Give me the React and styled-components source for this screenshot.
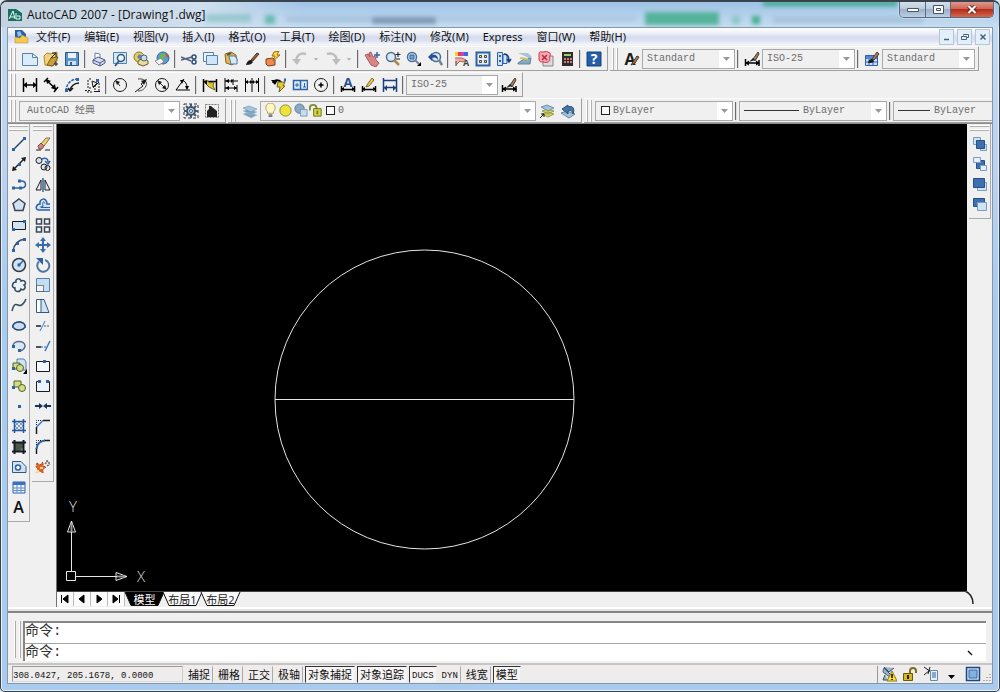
import { useState } from "react";
import styled, { createGlobalStyle } from 'styled-components'

const GlobalStyle = createGlobalStyle`
  * { box-sizing: border-box; }
  body {
    margin: 0;
    background: #dfe6ee;
    font-family: "Noto Sans", "Noto Sans CJK SC", sans-serif;
    font-size: 11px;
    color: #111;
  }
  button, select, input { font: inherit; color: inherit; }
`

const MONO = '"Liberation Mono", "Noto Sans CJK SC", monospace';

/* ---------- window ---------- */

const Window = styled.div`
  display: flex;
  flex-direction: column;
  min-height: 100vh;
  padding: 0 6px 7px;
  border: 1px solid #39424d;
  border-top-width: 2px;
  border-radius: 7px 7px 5px 5px;
  background: linear-gradient(#b5d1ec, #c3daf0 26px, #bdd3ee 160px, #a9cbee 300px, #a9cbee);
  box-shadow: inset 0 0 0 1px #e4f1fc;
`

const TitleBar = styled.header`
  position: relative;
  display: flex;
  align-items: center;
  height: 25px;
  margin: 0 -6px;
  padding-left: 7px;
  gap: 5px;
  border-radius: 6px 6px 0 0;
  background: linear-gradient(90deg, #c5d3e0, #cfdfee 200px, transparent 300px), linear-gradient(#9fc3e6, #c6ddf1);
  overflow: hidden;
`

const Title = styled.h1`
  flex: 1;
  margin: 0;
  font: 12px "Open Sans", sans-serif;
  position: relative;
`

const Glass = styled.span`
  position: absolute;
  left: ${ props => props.$x }px;
  top: ${ props => props.$y }px;
  width: ${ props => props.$w }px;
  height: ${ props => props.$h }px;
  background: ${ props => props.$bg };
  filter: blur(2px);
`

const Caption = styled.div`
  position: relative;
  display: flex;
  align-self: flex-start;
  height: 16px;
  margin-right: 5px;
  border: 1px solid #5b6c80;
  border-top: 0;
  border-radius: 0 0 5px 5px;
  overflow: hidden;
  box-shadow: 0 0 2px #fff;
`

const CaptionButton = styled.button`
  display: flex;
  align-items: center;
  justify-content: center;
  width: ${ props => props.$close ? 43 : 25 }px;
  padding: 0;
  border: 0;
  border-left: ${ props => props.$first ? '0' : '1px solid #5b6c80' };
  background: ${ props => props.$close
    ? 'linear-gradient(#dd9b90, #cf6553 45%, #b52c1a 50%, #d2694c)'
    : 'linear-gradient(#d5e0ec, #bccbdc 45%, #9db1c8 50%, #b9cfe4)' };
`

const Client = styled.div`
  flex: 1;
  display: flex;
  flex-direction: column;
  min-width: 0;
  border: 1px solid #8297ad;
  background: #f0f0f0;
  overflow: hidden;
`

/* ---------- menu ---------- */

const MenuBar = styled.nav`
  display: flex;
  align-items: center;
  height: 17px;
  padding-left: 6px;
  background: linear-gradient(#fff, #eef1f9 5px, #d6dcee 9px, #dde3f3 13px, #f5f7fc);
`

const MenuItem = styled.button`
  padding: 0 7px;
  border: 0;
  background: none;
  line-height: 16px;
  white-space: nowrap;
`

const MdiButtons = styled.div`
  display: flex;
  gap: 3px;
  margin-left: auto;
  padding-right: 2px;
`

const MdiButton = styled.button`
  display: flex;
  align-items: center;
  justify-content: center;
  width: 15px;
  height: 16px;
  padding: 0;
  border: 1px solid #b4c8da;
  background: #e3f0f9;
`

/* ---------- toolbars ---------- */

const Docks = styled.div`
  display: flex;
  flex-direction: column;
  gap: 1px;
  padding-top: 1px;
  border-bottom: 1px solid #8c8c8c;
`

const Dock = styled.div`
  display: flex;
  height: 25px;
`

const Toolbar = styled.div`
  display: flex;
  align-items: center;
  flex: ${ props => props.$grow ? '1 0 0' : 'none' };
  min-width: 0;
  overflow: hidden;
  padding-right: ${ props => props.$grow ? 0 : 3 }px;
  margin-right: ${ props => props.$grow ? 0 : 2 }px;
  border-right: ${ props => props.$grow ? '0' : '1px solid #a0a0a0' };
  border-bottom: 1px solid #a0a0a0;
  border-top: 1px solid #fbfbfb;
`

const Grip = styled.span`
  flex: none;
  width: 5px;
  height: 22px;
  margin: 0 3px;
  border: solid #b0b0b0;
  border-width: 0 1px;
  box-shadow: -1px 0 #fff, inset -1px 0 #fff;
`

const ToolButton = styled.button`
  flex: none;
  display: flex;
  align-items: center;
  justify-content: center;
  width: ${ props => props.$narrow ? 12 : 21 }px;
  height: 20px;
  padding: 0;
  border: 0;
  background: none;
  &:hover { background: #dce8f5; }
`

const TextTool = styled(ToolButton)`
  font: 600 16px/20px "Open Sans", sans-serif;
`

const Separator = styled.span`
  flex: none;
  width: 2px;
  height: 18px;
  margin: 0 2px;
  border-left: 1px solid #6a6a6a;
  background: #dadada;
`

const Combo = styled.label`
  position: relative;
  display: flex;
  align-items: center;
  flex: none;
  width: ${ props => props.$w }px;
  height: 20px;
  padding-left: ${ props => props.$pad || 3 }px;
  border: 1px solid #a9a9a9;
  background: #f0f0f0;
  color: #6d6d6d;
  select {
    flex: 1;
    min-width: 0;
    height: 18px;
    padding: 0 16px 0 1px;
    border: 0;
    outline: 0;
    appearance: none;
    background: none;
    font: 10px ${MONO};
  }
  i {
    position: absolute;
    right: 0;
    top: 0;
    display: flex;
    align-items: center;
    justify-content: center;
    width: 15px;
    height: 18px;
    background: #fff;
    pointer-events: none;
  }
`

const ColorBox = styled.span`
  flex: none;
  width: 9px;
  height: 9px;
  margin: 0 2px 0 3px;
  border: 1px solid #222;
  background: #fff;
`

const LineSample = styled.span`
  flex: none;
  width: ${ props => props.$w }px;
  height: 1px;
  margin-right: 3px;
  background: #333;
`

/* ---------- workspace ---------- */

const Workspace = styled.main`
  flex: 1;
  display: flex;
  min-height: 0;
`

const SideBar = styled.div`
  align-self: flex-start;
  flex: none;
  display: flex;
  flex-direction: column;
  justify-content: space-between;
  align-items: center;
  width: 22px;
  height: ${ props => props.$h }px;
  margin-right: 2px;
  padding: 2px 0 4px;
  border: solid #aaa;
  border-width: 0 1px 1px 0;
`

const SideGrip = styled.span`
  width: 19px;
  height: 5px;
  margin-bottom: 3px;
  border: solid #b0b0b0;
  border-width: 1px 0;
  box-shadow: 0 -1px #fff, inset 0 -1px #fff;
`

const Drawing = styled.section`
  flex: 1;
  display: flex;
  flex-direction: column;
  min-width: 0;
  border-left: 1px solid #707070;
`

const Canvas = styled.div`
  position: relative;
  flex: 1;
  min-height: 440px;
  border-bottom: 1px solid #444;
  background: #000;
  overflow: hidden;
`

const Model = styled.svg`
  position: absolute;
  inset: 0;
  width: 100%;
  height: 100%;
`

const Ucs = styled.svg`
  position: absolute;
  left: 4px;
  bottom: 1px;
`

const Tabs = styled.div`
  display: flex;
  height: 14px;
  margin-bottom: 5px;
`

const TabNav = styled.button`
  display: flex;
  align-items: center;
  justify-content: center;
  width: 17px;
  padding: 0;
  border: 0;
  border-right: 1px solid #bbb;
  background: #fbfbfb;
`

const Tab = styled.button`
  position: relative;
  width: 39px;
  padding: 0;
  border: 0;
  background: none;
  color: ${ props => props.$on ? '#fff' : '#222' };
  line-height: 13px;
  white-space: nowrap;
  & + & { margin-left: -1px; }
  svg {
    position: absolute;
    left: 0;
    top: 0;
    overflow: visible;
  }
  span { position: relative; }
`

const CurlMark = styled.svg`
  margin-left: auto;
  margin-right: -8px;
  overflow: visible;
`

const RightDock = styled.div`
  flex: none;
  width: 25px;
  padding-left: 2px;
`

/* ---------- command line ---------- */

const Command = styled.section`
  display: flex;
  padding: 8px 6px 2px 7px;
  border-top: 2px solid #858585;
  box-shadow: 0 -2px #e2e2e2, 0 -4px #fff;
`

const CommandGrip = styled.span`
  flex: none;
  width: 6px;
  margin: 0 2px 3px 0;
  border: solid #aaa;
  border-width: 0 1px;
  box-shadow: -1px 0 #fff, inset -1px 0 #fff;
`

const CommandBox = styled.div`
  flex: 1;
  min-width: 0;
  border: 2px solid #868686;
  border-right: 0;
  border-bottom: 0;
  background: #fff;
  font: 14px/20px ${MONO};
  color: #333;
`

const History = styled.output`
  display: block;
  height: 21px;
  line-height: 16px;
  border-bottom: 1px solid #a5a5a5;
`

const Prompt = styled.label`
  display: flex;
  height: 17px;
  line-height: 17px;
  input {
    flex: 1;
    min-width: 0;
    border: 0;
    outline: 0;
    background: none;
  }
`

/* ---------- status bar ---------- */

const Status = styled.footer`
  display: flex;
  align-items: center;
  height: 20px;
  padding: 0 0 0 4px;
  border-top: 2px solid #c6c4c4;
  background: #efecec;
`

const Coords = styled.output`
  width: 171px;
  height: 16px;
  margin-right: 2px;
  border: 1px solid #9c9c9c;
  border-right-color: #ccc;
  border-bottom-color: #ddd;
  font: 9px/18px ${MONO};
`

const Modes = styled.div`
  display: flex;
  gap: 2px;
`

const Mode = styled.button`
  height: 17px;
  padding: 0 2px;
  border: 1px solid;
  border-color: ${ props => props.$on ? '#333 #eee #eee #333' : '#efecec #aaa #efecec #efecec' };
  background: ${ props => props.$on ? '#f6f4f4' : 'transparent' };
  font-family: ${ props => props.$latin ? MONO : 'inherit' };
  font-size: ${ props => props.$latin ? 9 : 11 }px;
  line-height: ${ props => props.$latin ? 18 : 15 }px;
  white-space: nowrap;
`

const Tray = styled.div`
  display: flex;
  align-items: center;
  margin-left: auto;
  height: 17px;
  border-left: 1px solid #999;
`

/* ---------- icons, all on a 16 x 16 grid ---------- */

const B = '#2f62a3';
const K = '#1c1c1c';
const P = '#cfe3f5';

function Letter({ x, y, size, color, children }) {
  return <text x={x} y={y} textAnchor="middle" fontFamily="Open Sans, sans-serif" fontSize={size} fontWeight="700" fill={color}>{children}</text>;
}

const icons = {
  new: <path d="M.5 2.500h10l5 4v8H.5zM10.500 2.500v4h5" fill="#d9ecf8" stroke="#5582aa" />,
  open: <><path d="M1 5l3-3 4 1 6-2v9l-5 5-7-1z" fill="#f0d477" stroke="#a98734" /><path d="M4 14l4-7 7-1-5 9z" fill="#c8a13a" stroke="#7a6020" /><path d="M8 7l5-5m0 0v4m0-4H9M13 11v4M11 13h4" stroke={K} fill="none" /></>,
  save: <><path d="M1.500 1.500h13v13h-13z" fill="#5f93cc" stroke="#2a568d" /><path d="M4 2h8v5H4z" fill="#e9f3fb" /><path d="M4 10h8v4H4z" fill="#cfe0f0" /><path d="M6 11h2v3H6z" fill={B} /></>,
  print: <><path d="M4 8V2l5 1v5" fill="#fff" stroke="#6e7fae" /><path d="M2 9l5-3 7 3v3l-5 3-7-3z" fill="#d9dcee" stroke="#4e5a88" /><path d="M2 9l7 3 5-3M9 12v3" stroke="#4e5a88" fill="none" /></>,
  preview: <><path d="M1.500 1.500h13v11h-13z" fill="#d3e8f7" stroke="#5582aa" /><circle cx="9" cy="7" r="3.500" fill="#eef8ff" stroke="#375b80" strokeWidth="1.500" /><path d="M7 10l-4 5" stroke="#375b80" strokeWidth="2" /></>,
  publish: <><circle cx="6" cy="6" r="5" fill="#e7cf58" stroke="#92742b" /><path d="M6 3l4 2-3 4-3-3z" fill="#5a86bd" /><path d="M5 10l5-3 5 3v3l-5 2-5-2z" fill="#e9dc96" stroke="#705a26" /><circle cx="11" cy="7" r="3" fill="#cfdcea" stroke="#4a678c" /></>,
  globe: <><circle cx="9" cy="7" r="6" fill="#5b9bd4" stroke="#31659b" /><path d="M6 3c4-2 6 1 5 4s-5 2-5-4z" fill="#68b84b" /><path d="M1 10l6-3 3 4-5 3z" fill="#f4f4f4" stroke="#888" /><path d="M12 3l2 3" stroke="#d8502f" strokeWidth="2" /></>,
  cut: <><path d="M0 6l10 4M0 9l11-3" stroke="#50607a" strokeWidth="1.500" /><circle cx="13" cy="6" r="2" fill="none" stroke="#2f4f82" strokeWidth="1.500" /><circle cx="13" cy="11" r="2" fill="none" stroke="#2f4f82" strokeWidth="1.500" /></>,
  copy: <><path d="M1.500 1.500h10v9h-10z" fill="#eaf4fb" stroke="#5582aa" /><path d="M4.500 4.500h11v9h-11z" fill="#d0e6f6" stroke="#5582aa" /></>,
  paste: <><path d="M2 3l6-2 5 3 1 6-5 4-6-2z" fill="#e5b64a" stroke="#8b6725" /><path d="M6 5h6l2 3v5H8z" fill="#d7eaf7" stroke="#4f7ba4" /><path d="M4 4l4-2" stroke="#555" strokeWidth="2" /></>,
  brush: <><path d="M7 9l6-7 2 1-6 7z" fill="#93613a" stroke="#493222" /><path d="M2 14c1-4 3-5 5-5l2 2c-1 2-3 3-7 3z" fill={K} /></>,
  block: <><path d="M1 8l7-1 2 2v5l-7 1-2-2z" fill="#ee8a50" stroke="#823c21" /><path d="M9 1l5-1-2 4h3l-7 6 2-5H7z" fill="#ffd83c" stroke="#9a6a15" /></>,
  undo: <><path d="M14 3C8 1 4 5 4.500 10" fill="none" stroke="#bdbdbd" strokeWidth="2.500" /><path d="M0 8h9l-4 6z" fill="#bdbdbd" /></>,
  redo: <><path d="M2 3c6-2 10 2 9.500 7" fill="none" stroke="#bdbdbd" strokeWidth="2.500" /><path d="M16 8H7l4 6z" fill="#bdbdbd" /></>,
  drop: <path d="M5 7h6L8 10z" fill="#aaa" />,
  pan: <><path d="M1 4l3-1 2 3-1-4 2-1 2 5 2-1 1 4 3 3-3 4-5-2z" fill="#d98587" stroke="#a85a62" /><path d="M13 1v6M10 4h6" stroke={B} strokeWidth="1.500" /></>,
  zoomRt: <><circle cx="6" cy="6" r="4.500" fill="#d7e9f7" stroke="#4c6c91" strokeWidth="1.500" /><path d="M9 9l5 5" stroke="#ae894b" strokeWidth="2.500" /><path d="M13 1v5M10.500 3.500h5M11 8h4" stroke={K} /></>,
  zoomWin: <><circle cx="6" cy="6" r="4.500" fill="#d7e9f7" stroke="#4c6c91" strokeWidth="1.500" /><path d="M4 4h4v4H4z" fill="#76a5d6" stroke={B} /><path d="M9 9l4 4" stroke="#73859a" strokeWidth="2" /><path d="M15 11v4h-4z" fill="#000" /></>,
  zoomPrev: <><circle cx="9" cy="6" r="4.500" fill="#d7e9f7" stroke="#4c6c91" strokeWidth="1.500" /><path d="M12 9l3 5" stroke="#73859a" strokeWidth="2.500" /><path d="M1 6l4-4v2c4-1 6 1 6 5-2-3-4-3-6-2v3z" fill="#26519a" /></>,
  props: <><path d="M1 1h3v4H1z" fill="#f0d02e" /><path d="M4 1h3v4H4z" fill="#e84040" /><path d="M7 1h3v4H7z" fill="#ca3fd0" /><path d="M10 1h4v4h-4z" fill="#4364e0" /><path d="M1 7h7l4 2-3 2-3-1-4 4" fill="#e9b0a4" stroke="#a0685c" /><path d="M2 10v5" stroke="#444" /><Letter x="12" y="15" size="9" color="#444">A</Letter></>,
  center: <><path d="M1.500 1.500h13v13h-13z" fill="#dfeefa" stroke={B} strokeWidth="2" /><path d="M4.500 4.500h2v2h-2zM9.500 4.500h2v2h-2zM4.500 9.500h2v2h-2zM9.500 9.500h2v2h-2z" stroke="#444" fill="#f5e9a0" /></>,
  palettes: <><path d="M1.500 1.500h5v13h-5zM7 3.500h4v9H7z" fill={P} stroke={B} /><path d="M8 3c4 0 5 3 5 7m-2-2l2 3 2-3" stroke="#173c78" fill="none" strokeWidth="1.500" /><path d="M3 4h2v2H3zM3 9h2v2H3z" fill={B} /></>,
  sheets: <><path d="M1 2h10l4 4-3 1z" fill="#a8c3d8" /><path d="M1 12l6-4 7-1-1 6H1z" fill="#86a8c0" stroke="#62859d" /><path d="M3 7l8 1" stroke="#d4c86b" strokeWidth="2" /></>,
  markup: <><path d="M5 5h10v10H5z" fill="#dcdcdc" stroke="#888" /><path d="M1 3c0-3 3-2 4-2s3-1 5 0 3 1 2 4 1 5-2 6-3 0-5 0-4 0-4-3 0-3 0-5z" fill="#f0aab0" stroke="#d12f47" /><path d="M4 4l5 5m0-5L4 9" stroke="#c32440" strokeWidth="1.500" /></>,
  calc: <><path d="M3 1h11v14H3z" fill="#352a2a" /><path d="M5 3h7v2H5z" fill="#8fd36a" /><path d="M5 7h2v2H5zM8 7h2v2H8zM5 10h2v2H5zM8 10h2v2H8zM11 7h2v2h-2zM11 10h2v2h-2z" fill="#c97b7b" /></>,
  help: <><path d="M1 1h14v14H1z" fill="#245fa6" stroke="#16437c" /><Letter x="8" y="13" size="14" color="#fff">?</Letter></>,
  textStyle: <><Letter x="6" y="14" size="16" color={K}>A</Letter><path d="M9 11l4-6 2 1-4 6-4 2z" fill="#b38450" stroke="#493222" /></>,
  dimStyle: <><path d="M1.500 8v7M15 9v6M2 12h13" stroke="#000" strokeWidth="1.500" /><path d="M5 9.500L1 12l4 2.500zM12 9.500l4 2.500-4 2.500z" fill="#000" /><path d="M9 8l5-7 1 2-4 7z" fill="#a8835a" stroke="#49392e" /><path d="M5 11l4-4 2 2z" fill={K} /></>,
  tableStyle: <><path d="M1.500 4.500h12v10h-12z" fill="#cde0fa" stroke="#2f5fb5" /><path d="M2 5h11v3H2z" fill="#5385d4" /><path d="M1 11h12M5 8v6M9 8v6" stroke="#2f5fb5" /><path d="M8 8l5-7 2 2-5 6z" fill="#a8835a" stroke="#49392e" /><path d="M4 12c1-4 3-4 4-4l2 2c-1 2-3 2-6 2z" fill={K} /></>,

  dimLinear: <><path d="M1.500 1v14M14.500 1v14M2 8h12" stroke="#000" strokeWidth="1.500" /><path d="M5 5L1 8l4 3zM11 5l4 3-4 3z" fill="#000" /></>,
  dimAligned: <><path d="M5 1L1 5M15 10l-4 5M3 3l10 9" stroke="#000" strokeWidth="1.500" /><path d="M3 2l5 2-4 3zM13 13l-5-2 4-4z" fill="#000" /></>,
  dimArc: <><path d="M2 14C2 7 7 2 14 2" fill="none" stroke={B} strokeWidth="1.500" strokeDasharray="3 1" /><path d="M6 14c0-4 4-8 9-8M6 14l3-3M6 14l-2-3" stroke={K} fill="none" strokeWidth="1.500" /><path d="M12 1h3v3h-3zM1 12h3v3H1z" fill={B} /></>,
  dimOrd: <><path d="M3 3v8h4M0 13.500h5M4 2h2M14 6v9M10 8v7M2 15h5" stroke={K} fill="none" strokeDasharray="2 1" /><path d="M9 14.500h6M8 11l6-6" stroke={K} /><path d="M7 4l5 2-4 4z" fill="none" stroke={K} /><path d="M11 2h3v3h-3z" fill={B} /></>,
  dimRadius: <><circle cx="8" cy="8" r="6.500" fill="none" stroke={K} /><path d="M8 9L4 4" stroke={K} /><path d="M3 3l5 2-3 3z" fill={K} /></>,
  dimJog: <><path d="M5 2c6-1 10 3 8 7s-5 5-8 5" fill="none" stroke="#444" /><path d="M12 4L8 7l2 2-8 6" stroke={K} fill="none" /><path d="M14 2L8 4l3 4z" fill={K} /></>,
  dimDia: <><circle cx="8" cy="8" r="6.500" fill="none" stroke={K} /><path d="M4 4l8 8" stroke={K} /><path d="M3 3l5 2-3 3zM13 13l-5-2 3-3z" fill={K} /></>,
  dimAng: <><path d="M9 2L1 13h14M7 3c5 2 5 6 5 9" fill="none" stroke="#000" /><path d="M5 3h4L7 7zM10 9h4l-2 4z" fill="#000" /></>,
  dimQuick: <><path d="M1.500 2v13M14.500 2v13M2 4.500h12" stroke="#000" strokeWidth="1.500" /><path d="M4 3l4 3 4-1-1 4 2 4-6-3-4-4z" fill="#dccb2d" stroke="#6d6421" /><path d="M5 3L2 5l3 3z" fill="#000" /></>,
  dimBase: <><path d="M2 1v14M10 2v6M14 8v7M2 4h13M2 11h12" stroke="#000" /><path d="M6 2L2 4l4 2zM6 9l-4 2 4 2zM11 9l3 2-3 2zM8 2l2 2-2 2z" fill="#000" /></>,
  dimCont: <><path d="M1.500 1v14M8 1v14M14.500 1v14M2 5h12" stroke="#000" /><path d="M4 3L1 5l3 2zM6 3l2 2-2 2zM10 3L8 5l2 2zM12 3l3 2-3 2z" fill="#000" /></>,
  leader: <><path d="M2 6c2-4 6-3 8-1" fill="none" stroke="#000" strokeWidth="2" /><path d="M0 3l7 0-3 5z" fill="#000" /><path d="M7 5h7l-2 4h2l-6 6 1-5H6z" fill="#e4c83c" stroke="#6d6421" /><path d="M13 3h2" stroke={B} strokeWidth="3" /></>,
  tolerance: <><path d="M1.500 3.500h14v9h-14zM8.500 3.500v9" fill="#d8ebfb" stroke={B} strokeWidth="1.500" /><path d="M3 8h4M5 6v4M11 10h3M12.500 6v4" stroke={B} /></>,
  centerMark: <><circle cx="8" cy="8" r="6.500" fill="none" stroke={K} /><path d="M8 5.500v5M5.500 8h5" stroke="#000" strokeWidth="1.500" /></>,
  dimEdit: <><path d="M1.500 9v6M14.500 9v6M2 12.500h12" stroke="#000" strokeWidth="1.500" /><path d="M4 10l-3 2 3 2zM12 10l3 2-3 2z" fill="#000" /><Letter x="8" y="10" size="13" color="#1d4e91">A</Letter></>,
  dimTedit: <><path d="M1.500 9v6M14.500 9v6M2 12.500h12" stroke="#000" strokeWidth="1.500" /><path d="M4 10l-3 2 3 2zM12 10l3 2-3 2z" fill="#000" /><path d="M6 8l5-7 2 2-5 6-3 1z" fill="#f1ce4c" stroke="#80622c" /></>,
  dimUpdate: <><path d="M1.500 1v14M14.500 1v14M2 3.500h12M2 10.500h12" stroke="#173f7c" strokeWidth="1.500" /><path d="M5 8l-3 3 3 3zM11 8l3 3-3 3z" fill="#173f7c" /></>,

  gear: <><path d="M1 1h14v14H1z" fill="none" stroke="#333" strokeDasharray="3 2" /><circle cx="8" cy="8" r="4" fill="#bdd3e4" stroke="#405970" strokeWidth="2" /><path d="M8 1v3M8 12v3M1 8h3M12 8h3M3 3l2 2M11 11l2 2M13 3l-2 2M3 13l2-2" stroke="#405970" strokeWidth="2" /><circle cx="8" cy="8" r="1.500" fill="#fff" stroke="#405970" /></>,
  home: <><path d="M1.500 1.500h13v13h-13z" fill="none" stroke="#777" strokeDasharray="2 1" /><path d="M3 14V8l2-2V3h2l1 1 5 4v6z" fill="#202020" /></>,
  layers: <><path d="M1 11l6-2 8 3-6 3zM1 8l6-2 8 3-6 3z" fill="#7ba0bd" stroke="#a8c5da" strokeWidth=".5" /><path d="M1 5l6-2 8 3-6 3z" fill="#a7c4d8" stroke="#5f87a5" strokeWidth=".5" /></>,
  bulb: <><path d="M5 11c0-3-2-3-2-6a5 5 0 0 1 10 0c0 3-2 3-2 6z" fill="#fff9c4" stroke="#b59b50" /><path d="M6 12h4v3H6z" fill="#77808c" /></>,
  sun: <circle cx="8" cy="8" r="6" fill="#eee436" stroke="#898436" />,
  vport: <><circle cx="7" cy="6" r="5" fill="#8ca8c0" stroke="#5f809c" /><path d="M8 7h7v7H8z" fill="#c7dced" stroke="#7b9bb5" /></>,
  unlock: <><path d="M2 8V5c0-4 7-4 7 0v2" fill="none" stroke="#7e8c34" strokeWidth="2" /><path d="M6 6h8v8H6z" fill="#d8d63e" stroke="#6e6d1d" /><path d="M10 8v4" stroke="#7c7b28" strokeWidth="2" /></>,
  layPrev: <><path d="M3 11l6-2 6 2-6 3zM3 8l6-2 6 2-6 3z" fill="#d8cf4e" stroke="#9aa04e" /><path d="M2 4l6-2 7 3-6 3z" fill="#a3c1d8" stroke="#6f93af" /><path d="M1 15l4-4m0 0v3m0-3H2" stroke={K} /></>,
  layUndo: <><path d="M1 10l6-2 8 3-6 4z" fill="#a7c4d8" stroke="#5f87a5" /><path d="M2 6l6-4v2c5-2 7 2 5 7-1-4-3-4-5-3v3z" fill="#4474a8" stroke="#264f7d" /></>,

  line: <><path d="M2 14L14 2" stroke="#24415f" strokeWidth="1.500" /><path d="M1 12h3v3H1zM12 1h3v3h-3z" fill={B} /></>,
  xline: <><path d="M2 14L14 2" stroke={K} strokeWidth="1.500" /><path d="M1 15l1-5 4 4zM15 1l-5 1 4 4z" fill={K} /><path d="M7 7h3v3H7z" fill={B} /></>,
  pline: <><path d="M2 12h8c6 0 6-7 0-7H8" stroke={B} strokeWidth="1.500" fill="none" /><path d="M1 10.500h3v3H1zM7 3.500h3v3H7zM8 10.500h3v3H8z" fill={B} /></>,
  polygon: <path d="M8 2l6 4.500-2 7H4l-2-7z" fill={P} stroke="#3d4650" strokeWidth="1.500" />,
  rect: <><path d="M1.500 4.500h13v8h-13z" fill={P} stroke={K} /><path d="M12 3h3v3h-3zM1 11h3v3H1z" fill={B} /></>,
  arc: <><path d="M2 14C3 8 6 3 14 2" stroke="#3b4f66" strokeWidth="1.500" fill="none" /><path d="M1 12h3v3H1zM5 5h3v3H5zM12 1h3v3h-3z" fill={B} /></>,
  circle: <><circle cx="8" cy="8" r="6.500" fill={P} stroke="#333c46" strokeWidth="1.500" /><path d="M8 8l4-4" stroke={B} strokeWidth="1.500" /><path d="M6.500 6.500h3v3h-3z" fill={B} /></>,
  cloud: <path d="M5 5c-1-4 5-4 5-1 4-2 6 3 3 4 3 3-1 6-3 4-1 4-7 3-6-1C0 11 1 5 5 5z" fill="#edf3fa" stroke="#33475f" strokeWidth="1.500" />,
  spline: <path d="M1 14c2-8 4-7 6-6s5 1 8-6" fill="none" stroke="#3c4b60" strokeWidth="1.500" />,
  ellipse: <><ellipse cx="8" cy="8" rx="6" ry="4" fill="#cdddf0" stroke="#274769" strokeWidth="1.500" /><path d="M1 7h2v3H1zM13 7h2v3h-2zM7 3h3v2H7z" fill={B} /></>,
  earc: <><path d="M2 8c0-6 12-6 12 0 0 3-2 4-5 5" fill="#dce6f1" stroke="#536c89" strokeWidth="1.500" /><path d="M1 7h3v3H1zM7 11h3v3H7z" fill={B} /></>,
  insert: <><path d="M6 1h7l2 3v8H6z" fill={P} stroke="#5582aa" /><path d="M2 5h7v6H2z" fill="#d4dd83" stroke="#556128" /><circle cx="9" cy="10" r="3.500" fill="#d4dd83" stroke="#556128" /><path d="M1 9h3v3H1z" fill={B} /><path d="M16 11v5h-4z" fill="#000" /></>,
  mkblock: <><path d="M3 3h7v6H3z" fill="#d4dd83" stroke="#556128" /><circle cx="11" cy="10" r="3.500" fill="#d4dd83" stroke="#556128" /><path d="M1 8h3v3H1z" fill={B} /></>,
  point: <path d="M7 7h3v3H7z" fill={B} />,
  hatch: <><path d="M4 4h9v8H4z" fill="#ddeaf7" /><path d="M4 8l4-4M4 12l8-8M8 12l5-5M4 4l8 8M8 4l5 5M4 8l4 4" stroke="#8199bd" /><path d="M1 3.500h14M1 12.500h14M3.500 1v14M12.500 1v14" stroke="#24549a" strokeWidth="1.500" /></>,
  gradient: <><path d="M3 3h10v10H3z" fill="#4c5848" /><path d="M8 13l5-6v6z" fill="#9ba073" /><path d="M1 3.500h14M1 12.500h14M3.500 1v14M12.500 1v14" stroke="#141c2a" strokeWidth="2" /></>,
  region: <><path d="M1.500 2.500H10l5 5v6H1.500z" fill={P} stroke="#34597f" /><circle cx="7" cy="8.500" r="2.500" fill="#fff" stroke={B} strokeWidth="1.500" /></>,
  table: <><path d="M2 3h12v11H2z" fill="#eef5fe" stroke={B} /><path d="M2 3h12v3H2z" fill="#3e6fc1" /><path d="M2 9h12M2 11.500h12M6 6v8M10 6v8" stroke="#5c8bd2" /></>,

  erase: <><path d="M5 9l6-7h4l-6 8z" fill="#f0d370" stroke="#8d753b" /><path d="M3 10l3-3 3 3-2 3H4z" fill="#d98080" stroke="#844c4c" /><path d="M1 14h5M10 14h5" stroke={K} /></>,
  dup: <><circle cx="4" cy="4.500" r="3" fill={P} stroke={K} /><circle cx="9" cy="11" r="3" fill={P} stroke={K} /><circle cx="12.500" cy="12" r="2.500" fill="none" stroke={K} /><path d="M7 3c4-2 6 0 6 3m-3-1l3 3 2-3" stroke={B} fill="none" strokeWidth="1.500" /></>,
  mirror: <><path d="M6 3v10H1zM10 3v10h5z" fill="#e6eef6" stroke={K} /><path d="M8 1v14" stroke={B} strokeWidth="1.500" /></>,
  offset: <><path d="M15 13H3c-3-1-2-6 2-6C4 1 12 0 12 7h3" fill={P} stroke={B} strokeWidth="1.500" /><path d="M15 10.500H6c-1-1 0-1 2-1-1-5 1-6 2-3" fill="none" stroke={B} /></>,
  array: <path d="M1.500 2h5v5h-5zM9.500 2h5v5h-5zM1.500 10h5v5h-5zM9.500 10h5v5h-5z" fill="#edf5fd" stroke="#3d4650" strokeWidth="1.500" />,
  move: <path d="M8 0l3 4H9v3h3V5l4 3-4 3V9H9v3h2l-3 4-3-4h2V9H4v2L0 8l4-3v2h3V4H5z" fill="#386da8" />,
  rotate: <><path d="M4 4.500a6 6 0 1 0 6-1.500" fill="none" stroke="#52779f" strokeWidth="2" /><path d="M1 1h7v7z" fill={B} /></>,
  scale: <><path d="M1.500 1.500h13v13h-13z" fill="#c5ddf2" stroke="#5582aa" /><path d="M1.500 8.500h7v6h-7z" fill="#eaf5fd" stroke={K} strokeDasharray="1 1" /></>,
  stretch: <><path d="M1.500 1.500h6v13h-6z" fill="#fff" stroke="#34597f" /><path d="M6 1.500h3l5 13H6z" fill={P} stroke="#34597f" /></>,
  trim: <><path d="M1 8h5" stroke={K} strokeWidth="1.500" /><path d="M9 8h6" stroke={B} strokeDasharray="2 1" /><path d="M5 13l5-10" stroke="#3b79c7" /></>,
  extend: <><path d="M1 9h5" stroke={K} strokeWidth="1.500" /><path d="M6 9h6" stroke={B} strokeDasharray="2 1" /><path d="M10 13l5-10" stroke="#3b79c7" strokeWidth="1.500" /></>,
  break1: <><path d="M1.500 3.500h13v10h-13z" fill="#f3f8fd" stroke={K} /><path d="M8 2h3v3H8z" fill={B} /></>,
  break2: <><path d="M4 3.500H1.500v10h13v-10H12" fill="#eaf4fc" stroke={K} /><path d="M3 2h3v3H3zM11 2h3v3h-3z" fill={B} /></>,
  join: <><path d="M0 8h6M10 8h6" stroke="#173458" strokeWidth="2" /><path d="M4 5l4 3-4 3zM12 5L8 8l4 3z" fill="#173458" /></>,
  chamfer: <><path d="M1.500 15V8M8 1.500h7" stroke={K} strokeWidth="1.500" /><path d="M1.500 8L8 1.500" stroke="#3b79c7" strokeWidth="1.500" /><path d="M1.500 6V1.500H7" fill="none" stroke={K} strokeDasharray="1 1" /></>,
  fillet: <><path d="M1.500 15V9M9 1.500h6" stroke={K} strokeWidth="1.500" /><path d="M1.500 10C2 5 5 2 10 1.500" fill="none" stroke={B} strokeWidth="2" /><path d="M1.500 6V1.500H7" fill="none" stroke={K} strokeDasharray="1 1" /></>,
  explode: <><path d="M2 4l3 2 3-3v4l3 1-3 2v4l-3-2-3 2 1-4-2-2z" fill="#e2662c" stroke="#bb3b25" strokeDasharray="2 1" /><path d="M5 8h3v2H5zM2 11h2v3H2z" fill="#ffe070" /><path d="M10 5l3-3M12 7l3-2M11 2h2M14 3v2" stroke="#6a6a6a" strokeWidth="1.500" strokeDasharray="2 1" /></>,

  front: <><path d="M1.500 1.500h7v7h-7zM8.500 8.500h6v6h-6z" fill={P} stroke="#7a9cc0" /><path d="M4.500 4.500h8v8h-8z" fill="#3e70b0" stroke="#274f88" /></>,
  back: <><path d="M4.500 4.500h8v8h-8z" fill="#3e70b0" stroke="#274f88" /><path d="M1.500 1.500h7v5h-7zM8.500 9.500h6v5h-6z" fill="#e5f0fa" stroke="#7a9cc0" /></>,
  above: <><path d="M5.500 6.500h9v8h-9z" fill={P} stroke="#7a9cc0" /><path d="M1.500 2.500h11v9h-11z" fill="#3e70b0" stroke="#274f88" /></>,
  under: <><path d="M1.500 2.500h11v8h-11z" fill="#3e70b0" stroke="#274f88" /><path d="M5.500 6.500h9v8h-9z" fill={P} stroke="#7a9cc0" /></>,

  comm: <><path d="M3 1l5 5 5-4M5 8c-4-1-3-4-2-6l7 7c-2 2-4 1-5-1zM4 9l-2 5h5" fill="#9bb3cc" stroke="#38506b" /><path d="M11 5l5 10H6z" fill="#ffe322" stroke="#8a7a18" /><path d="M11 8v4M11 13v1" stroke="#000" strokeWidth="1.500" /></>,
  lock: <><path d="M8 8V5c0-4 6-4 6 0v2" fill="none" stroke="#7e6e1c" strokeWidth="2" /><path d="M1.500 7.500h9v7h-9z" fill="#d6b71e" stroke="#69590f" /><path d="M6 9v4" stroke="#222" strokeWidth="2" /></>,
  plot: <><path d="M1 1l7 5M7 1l-2 7M1 9l6-5" stroke={K} /><path d="M7.500 4.500h7v10h-7z" fill="#e6f0f8" stroke="#6a88a5" /><path d="M9 7h4M9 9h4M9 11h4" stroke={B} /></>,
  trayMenu: <path d="M4 9h7l-3.500 4z" fill="#000" />,
  clean: <><path d="M1.500 1.500h13v13h-13z" fill="#c9dff3" stroke="#1c4882" strokeWidth="1.500" /><path d="M4 4h8v8H4z" fill="#83b0de" stroke="#3a6da8" /></>,
};

function Icon({ name, size = 16 }) {
  return <svg width={size} height={size} viewBox="0 0 16 16" fill="none" aria-hidden="true">{icons[name]}</svg>;
}

// '|' 는 구분선
function Tools({ items }) {
  return items.map((name, i) => name === '|'
    ? <Separator key={i} />
    : <ToolButton key={i} aria-label={name} $narrow={name === 'drop'}><Icon name={name} /></ToolButton>
  );
}

function Picker({ label, value, width, pad, arrow = true, children }) {
  return (
    <Combo $w={width} $pad={pad}>
      {children}
      <select aria-label={label} defaultValue={value}>
        <option>{value}</option>
      </select>
      {arrow && <i><svg width="7" height="4"><path d="M0 0h7L3.500 4z" fill="#999" /></svg></i>}
    </Combo>
  );
}

const menus = ['文件(F)', '编辑(E)', '视图(V)', '插入(I)', '格式(O)', '工具(T)', '绘图(D)', '标注(N)', '修改(M)', 'Express', '窗口(W)', '帮助(H)'];

const standard = ['new', 'open', 'save', '|', 'print', 'preview', 'publish', 'globe', '|', 'cut', 'copy', 'paste', 'brush', 'block', '|',
  'undo', 'drop', 'redo', 'drop', '|', 'pan', 'zoomRt', 'zoomWin', 'zoomPrev', '|', 'props', 'center', 'palettes', 'sheets', 'markup', 'calc', '|', 'help'];

const dimension = ['dimLinear', 'dimAligned', 'dimArc', 'dimOrd', '|', 'dimRadius', 'dimJog', 'dimDia', 'dimAng', '|', 'dimQuick', 'dimBase', 'dimCont', '|',
  'leader', 'tolerance', 'centerMark', '|', 'dimEdit', 'dimTedit', 'dimUpdate', '|'];

const draw = ['line', 'xline', 'pline', 'polygon', 'rect', 'arc', 'circle', 'cloud', 'spline', 'ellipse', 'earc', 'insert', 'mkblock', 'point', 'hatch', 'gradient', 'region', 'table'];

const modify = ['erase', 'dup', 'mirror', 'offset', 'array', 'move', 'rotate', 'scale', 'stretch', 'trim', 'extend', 'break1', 'break2', 'join', 'chamfer', 'fillet', 'explode'];

const navPaths = [
  ['first', 'M1.500 1v8M8 1v8L3 5z'],
  ['previous', 'M7 1v8L2 5z'],
  ['next', 'M3 1v8l5-4z'],
  ['last', 'M8.500 1v8M2 1v8l5-4z'],
];

function App() {
  const [tab, setTab] = useState('模型');
  const [modes, setModes] = useState({ '对象捕捉': true, '对象追踪': true, 'DUCS': true, '模型': true });

  return (
    <>
      <GlobalStyle />
      <Window>
        <TitleBar>
          <Glass $x={205} $y={12} $w={45} $h={8} $bg="#6fb8b488" />
          <Glass $x={264} $y={13} $w={10} $h={9} $bg="#3fae92aa" />
          <Glass $x={285} $y={15} $w={85} $h={5} $bg="#7f9db855" />
          <Glass $x={371} $y={15} $w={64} $h={7} $bg="#54708e99" />
          <Glass $x={437} $y={15} $w={198} $h={4} $bg="#7f9db844" />
          <Glass $x={644} $y={10} $w={74} $h={13} $bg="#55b39b" />
          <Glass $x={731} $y={14} $w={8} $h={8} $bg="#6dbda999" />
          <Glass $x={751} $y={14} $w={8} $h={8} $bg="#43ae8e" />
          <Glass $x={762} $y={-1} $w={134} $h={5} $bg="#3faa8c" />
          <Glass $x={772} $y={15} $w={150} $h={6} $bg="#7f9db855" />
          <svg width="14" height="14" viewBox="0 0 14 14">
            <path d="M0 1h14v12H0z" fill="#1d6d63" />
            <path d="M1 11L5 3l2 8M2 9h4M8 5v6h4V8H9" fill="none" stroke="#e6fff8" />
            <path d="M8 1h6v4z" fill="#bfe2dc" />
          </svg>
          <Title>AutoCAD 2007 - [Drawing1.dwg]</Title>
          <Caption>
            <CaptionButton $first aria-label="最小化"><svg width="12" height="6"><path d="M.5 1.500h11v3H.5z" fill="#fff" stroke="#47556b" /></svg></CaptionButton>
            <CaptionButton aria-label="最大化"><svg width="11" height="9"><path d="M.5.5h10v8H.5zM3.500 3.500h4v2h-4z" fill="#fff" stroke="#47556b" /></svg></CaptionButton>
            <CaptionButton $close aria-label="关闭"><svg width="10" height="9"><path d="M1.500 1l7 7m0-7l-7 7" stroke="#6d2a22" strokeWidth="4" /><path d="M1.500 1l7 7m0-7l-7 7" stroke="#fff" strokeWidth="2" /></svg></CaptionButton>
          </Caption>
        </TitleBar>

        <Client>
          <MenuBar>
            <svg width="15" height="15" viewBox="0 0 15 15">
              <path d="M1 1h7l4 4v6H1z" fill="#2a5ea3" />
              <path d="M3 3l3-1 2 4-4 2z" fill="#8fc1f2" />
              <path d="M1 14V8l5 1 2-3 6 3v5z" fill="#f4c94c" stroke="#b98a26" strokeWidth=".5" />
            </svg>
            {menus.map((name) => <MenuItem key={name}>{name}</MenuItem>)}
            <MdiButtons>
              <MdiButton aria-label="最小化"><svg width="8" height="8"><path d="M1 6.500h5" stroke="#4a6074" strokeWidth="1.500" /></svg></MdiButton>
              <MdiButton aria-label="还原"><svg width="8" height="8"><path d="M2.500 2.500v-1h5v3h-2M.5 3.500h5v3h-5z" fill="none" stroke="#4a6074" /></svg></MdiButton>
              <MdiButton aria-label="关闭"><svg width="8" height="8"><path d="M1.500 1.500l5 5m0-5l-5 5" stroke="#4a6074" strokeWidth="1.500" /></svg></MdiButton>
            </MdiButtons>
          </MenuBar>

          <Docks>
            <Dock>
              <Toolbar>
                <Grip />
                <Tools items={standard} />
              </Toolbar>
              <Toolbar>
                <Grip />
                <Tools items={['textStyle']} />
                <Picker label="文字样式" value="Standard" width={93} />
                <Separator />
                <Tools items={['dimStyle']} />
                <Picker label="标注样式" value="ISO-25" width={93} />
                <Separator />
                <Tools items={['tableStyle']} />
                <Picker label="表格样式" value="Standard" width={93} />
              </Toolbar>
            </Dock>
            <Dock>
              <Toolbar>
                <Grip />
                <Tools items={dimension} />
                <Picker label="标注样式控制" value="ISO-25" width={92} />
                <Tools items={['dimStyle']} />
              </Toolbar>
            </Dock>
            <Dock>
              <Toolbar>
                <Grip />
                <Picker label="工作空间" value="AutoCAD 经典" width={161} pad={6} />
                <Tools items={['gear', 'home']} />
              </Toolbar>
              <Toolbar>
                <Grip />
                <Tools items={['layers']} />
                <Picker label="图层" value="0" width={276} pad={2}>
                  <Icon name="bulb" size={15} />
                  <Icon name="sun" size={15} />
                  <Icon name="vport" size={15} />
                  <Icon name="unlock" size={15} />
                  <ColorBox />
                </Picker>
                <Tools items={['layPrev', 'layUndo']} />
              </Toolbar>
              <Toolbar $grow>
                <Grip />
                <Picker label="颜色" value="ByLayer" width={138} pad={2}>
                  <ColorBox />
                </Picker>
                <Separator />
                <Picker label="线型" value="ByLayer" width={148} pad={4}>
                  <LineSample $w={55} />
                </Picker>
                <Separator />
                <Picker label="线宽控制" value="ByLayer" width={148} pad={4} arrow={false}>
                  <LineSample $w={32} />
                </Picker>
              </Toolbar>
            </Dock>
          </Docks>

          <Workspace>
            <SideBar $h={398}>
              <SideGrip />
              <Tools items={draw} />
              <TextTool>A</TextTool>
            </SideBar>
            <SideBar $h={358}>
              <SideGrip />
              <Tools items={modify} />
            </SideBar>
            <Drawing>
              <Canvas>
                <Model fill="none" stroke="#e6e6e6">
                  <circle cx="367.500" cy="275.500" r="149.500" />
                  <path d="M218 275.500h299" />
                </Model>
                <Ucs width="94" height="98" viewBox="0 0 94 98" fill="none" stroke="#e6e6e6">
                  <path d="M5.500 79.500h9v9h-9zM10.500 79V29M15 84.500h51" />
                  <path d="M10.500 29l4 11h-8zM66 84.500l-11-4v8z" />
                  <path d="M10.500 31v9M56 84.500h8" strokeWidth="2" stroke="#999" />
                  <text x="12" y="20" textAnchor="middle" fontFamily="Open Sans" fontSize="15" fontWeight="300" fill="#ddd" stroke="none">Y</text>
                  <text x="80" y="90" textAnchor="middle" fontFamily="Open Sans" fontSize="15" fontWeight="300" fill="#ddd" stroke="none">X</text>
                </Ucs>
              </Canvas>
              <Tabs>
                {navPaths.map(([name, d]) => (
                  <TabNav key={name} aria-label={name}><svg width="10" height="10"><path d={d} fill="#000" stroke="#000" strokeWidth="1" /></svg></TabNav>
                ))}
                {['模型', '布局1', '布局2'].map((name) => (
                  <Tab key={name} $on={tab === name} onClick={() => { setTab(name) }}>
                    <svg width="39" height="14"><path d="M0 0l6 13.500h27L39 0" fill={tab === name ? '#000' : '#fafafa'} stroke="#111" /></svg>
                    <span>{name}</span>
                  </Tab>
                ))}
                <CurlMark width="10" height="14"><path d="M0-1c5 2 8 7 8 13" fill="none" stroke="#222" strokeWidth="1.500" /></CurlMark>
              </Tabs>
            </Drawing>
            <RightDock>
              <SideBar $h={95}>
                <SideGrip />
                <Tools items={['front', 'back', 'above', 'under']} />
              </SideBar>
            </RightDock>
          </Workspace>

          <Command>
            <CommandGrip />
            <CommandBox>
              <History>命令:</History>
              <Prompt>命令:<input aria-label="命令" /><svg width="20" height="17"><path d="M2 7l4 4" stroke="#111" strokeWidth="1.500" /></svg></Prompt>
            </CommandBox>
          </Command>

          <Status>
            <Coords>308.0427, 205.1678, 0.0000</Coords>
            <Modes>
              {['捕捉', '栅格', '正交', '极轴', '对象捕捉', '对象追踪', 'DUCS', 'DYN', '线宽', '模型'].map((name) => (
                <Mode
                  key={name}
                  $on={modes[name]}
                  $latin={name[0] === 'D'}
                  aria-pressed={!!modes[name]}
                  onClick={() => { setModes({ ...modes, [name]: !modes[name] }) }}
                >{name}</Mode>
              ))}
            </Modes>
            <Tray>
              <Tools items={['comm', 'lock', 'plot', 'trayMenu', 'clean']} />
              <svg width="9" height="16"><path d="M7 8v1M7 11v1M7 14v1M4 11v1M4 14v1M1 14v1" stroke="#aaa" strokeWidth="2" /></svg>
            </Tray>
          </Status>
        </Client>
      </Window>
    </>
  );
}

export default App;
